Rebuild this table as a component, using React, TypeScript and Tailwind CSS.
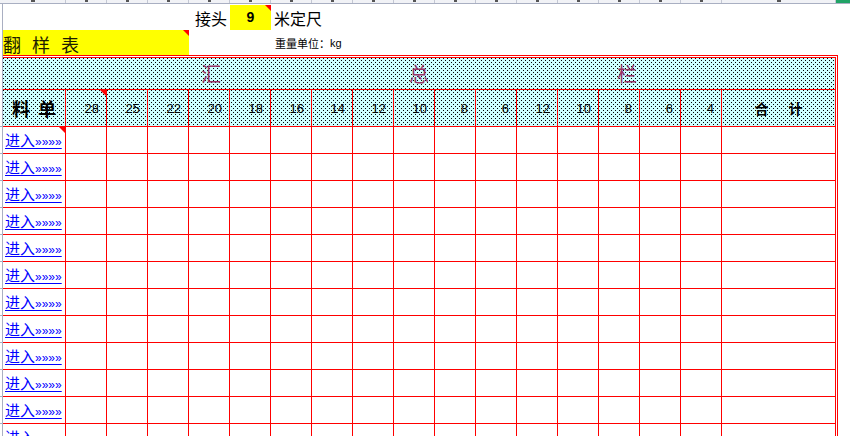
import React from "react";

const nums = ["28", "25", "22", "20", "18", "16", "14", "12", "10", "8", "6", "12", "10", "8", "6", "4"];

function Tri() {
  return (
    <div className="absolute top-0 right-0 w-0 h-0 border-t-[6px] border-t-[#ff0000] border-l-[6px] border-l-transparent" />
  );
}

const dots =
  "bg-[#ccffff] [background-image:conic-gradient(from_270deg_at_1px_1px,#000_90deg,transparent_0),conic-gradient(from_270deg_at_1px_1px,#000_90deg,transparent_0)] [background-size:4px_4px,4px_4px] [background-position:0_0,2px_2px]";

function DataRow({ first }: { first?: boolean }) {
  return (
    <div className="flex h-[27px] border-b border-[#ff0000]">
      <div className="relative w-[63px] shrink-0 border-r border-[#ff0000] flex items-end pl-[2px] pb-[2px]">
        <a className="text-[15px] leading-[17px] text-[#0000ff] underline underline-offset-[2px] whitespace-nowrap font-['Noto_Sans_CJK_SC',sans-serif]">
          进入<span className="font-['Liberation_Sans',sans-serif] text-[12px]">»»»»</span>
        </a>
        {first && <Tri />}
      </div>
      {nums.map((_, i) => (
        <div key={i} className="w-[41px] shrink-0 border-r border-[#ff0000]" />
      ))}
      <div className="w-[113px] shrink-0" />
    </div>
  );
}

export default function App() {
  const topCols = Array.from({ length: 16 });
  return (
    <div className="relative w-[850px] h-[436px] overflow-hidden bg-white text-black font-['Noto_Sans_CJK_SC',sans-serif]">
      {/* column header strip */}
      <div className="flex h-[4px] bg-[#f1f2f6] border-b border-[#a9afc2]">
        <div className="w-[66px] shrink-0 border-r border-[#c3c7d3] flex justify-center">
          <div className="w-[4px] h-[2px] bg-[#555]" />
        </div>
        {topCols.map((_, i) => (
          <div key={i} className="w-[41px] shrink-0 border-r border-[#c3c7d3] flex justify-center">
            <div className="w-[3px] h-[2px] bg-[#555]" />
          </div>
        ))}
        <div className="w-[114px] shrink-0 border-r border-[#c3c7d3] flex justify-center">
          <div className="w-[4px] h-[2px] bg-[#555]" />
        </div>
        <div className="flex-1 bg-[#21a366]" />
      </div>

      <div className="flex">
        {/* row header gutter */}
        <div className="w-[3px] shrink-0 border-r border-[#a9afc2] flex flex-col">
          <div className="h-[122px] shrink-0" />
          {Array.from({ length: 12 }).map((_, i) => (
            <div key={i} className="h-[27px] shrink-0 border-t border-[#a9afc2]" />
          ))}
        </div>

        <div className="flex flex-col w-[847px]">
          {/* row 1 */}
          <div className="flex h-[26px] items-end">
            <div className="w-[186px] shrink-0" />
            <div className="w-[41px] h-[25px] shrink-0 flex items-center justify-end pr-[3px] text-[16px] leading-none">
              接头
            </div>
            <div className="relative w-[41px] h-[25px] shrink-0 bg-[#ffff00] flex items-center justify-center font-['Liberation_Sans',sans-serif] font-bold text-[14px]">
              9
              <Tri />
            </div>
            <div className="h-[25px] flex items-center pl-[3px] text-[16px] leading-none">米定尺</div>
          </div>

          {/* row 2 */}
          <div className="flex h-[25px]">
            <div className="relative w-[186px] shrink-0 bg-[#ffff00] flex items-end pb-[1px] gap-[11px] text-[18px] leading-[20px] text-[#1c1c00]">
              <span>翻</span>
              <span>样</span>
              <span>表</span>
              <Tri />
            </div>
            <div className="w-[86px] shrink-0" />
            <div className="flex items-center text-[11px] leading-none pt-[2px]">
              重量单位：<span className="font-['Liberation_Sans',sans-serif]">kg</span>
            </div>
          </div>

          {/* table */}
          <div className="w-[835px] border-t-[3px] border-r-[3px] border-double border-[#ff0000] border-l-0 border-b-0">
            <div className={dots}>
              <div className="h-[32px] border-b border-[#ff0000] flex items-center justify-center gap-[188px] text-[20px] leading-none text-[#993366]">
                <span>汇</span>
                <span>总</span>
                <span>栏</span>
              </div>
              <div className="flex h-[37px] border-b border-[#ff0000]">
                <div className="w-[63px] shrink-0 border-r border-[#ff0000] flex items-center justify-center gap-[8px] text-[18px] font-bold leading-none">
                  <span>料</span>
                  <span>单</span>
                </div>
                {nums.map((n, i) => (
                  <div
                    key={i}
                    className="relative w-[41px] shrink-0 border-r border-[#ff0000] flex items-center justify-end pr-[7px] text-[13px] leading-none font-['Liberation_Sans',sans-serif]"
                  >
                    {n}
                    {i === 0 && <Tri />}
                  </div>
                ))}
                <div className="w-[113px] shrink-0 flex items-center justify-center gap-[20px] text-[14px] font-bold leading-none">
                  <span>合</span>
                  <span>计</span>
                </div>
              </div>
            </div>
            {Array.from({ length: 12 }).map((_, i) => (
              <DataRow key={i} first={i === 0} />
            ))}
          </div>
        </div>
      </div>
    </div>
  );
}
